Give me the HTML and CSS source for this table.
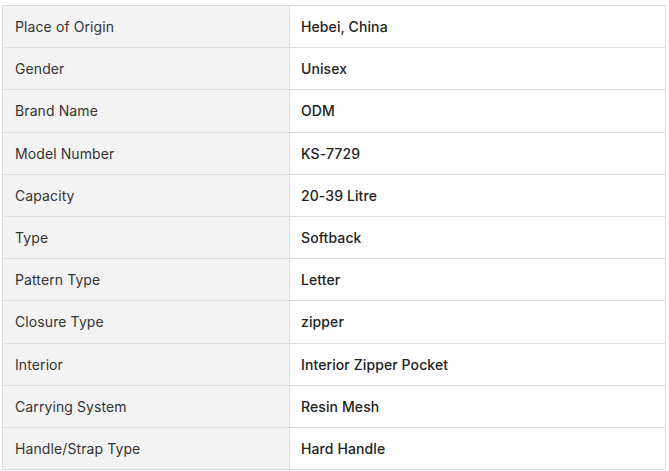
FILE: index.html
```html
<!DOCTYPE html>
<html>
<head>
<meta charset="utf-8">
<link rel="stylesheet" href="styles.css">
</head>
<body>
<div class="wrap">
<table class="spec">
<colgroup><col class="c1"><col class="c2"></colgroup>
<tbody>
<tr><td class="k">Place of Origin</td><td class="v">Hebei, China</td></tr>
<tr><td class="k">Gender</td><td class="v">Unisex</td></tr>
<tr><td class="k">Brand Name</td><td class="v">ODM</td></tr>
<tr><td class="k">Model Number</td><td class="v">KS-7729</td></tr>
<tr><td class="k">Capacity</td><td class="v">20-39 Litre</td></tr>
<tr><td class="k">Type</td><td class="v">Softback</td></tr>
<tr><td class="k">Pattern Type</td><td class="v">Letter</td></tr>
<tr><td class="k">Closure Type</td><td class="v">zipper</td></tr>
<tr><td class="k">Interior</td><td class="v">Interior Zipper Pocket</td></tr>
<tr><td class="k">Carrying System</td><td class="v">Resin Mesh</td></tr>
<tr><td class="k">Handle/Strap Type</td><td class="v">Hard Handle</td></tr>
</tbody>
</table>
</div>
</body>
</html>
```
FILE: styles.css
```css
html, body {
  margin: 0;
  padding: 0;
  background: #ffffff;
}
.wrap {
  padding: 5px 0 0 2px;
}
.spec {
  border-collapse: collapse;
  width: 664px;
  table-layout: fixed;
  font-family: Inter, "Noto Sans", sans-serif;
  font-size: 14px;
  letter-spacing: 0.1px;
  color: #222222;
}
.c1 { width: 287px; }
.spec td {
  border: 1px solid #dddddd;
  padding: 12px 12px;
  line-height: 17.18px;
  vertical-align: middle;
  white-space: nowrap;
}
.spec .k {
  background: #f3f3f3;
  font-weight: 400;
  color: #333333;
}
.spec .v {
  background: #ffffff;
  font-weight: 500;
  color: #222222;
  padding-left: 11px;
}
```
